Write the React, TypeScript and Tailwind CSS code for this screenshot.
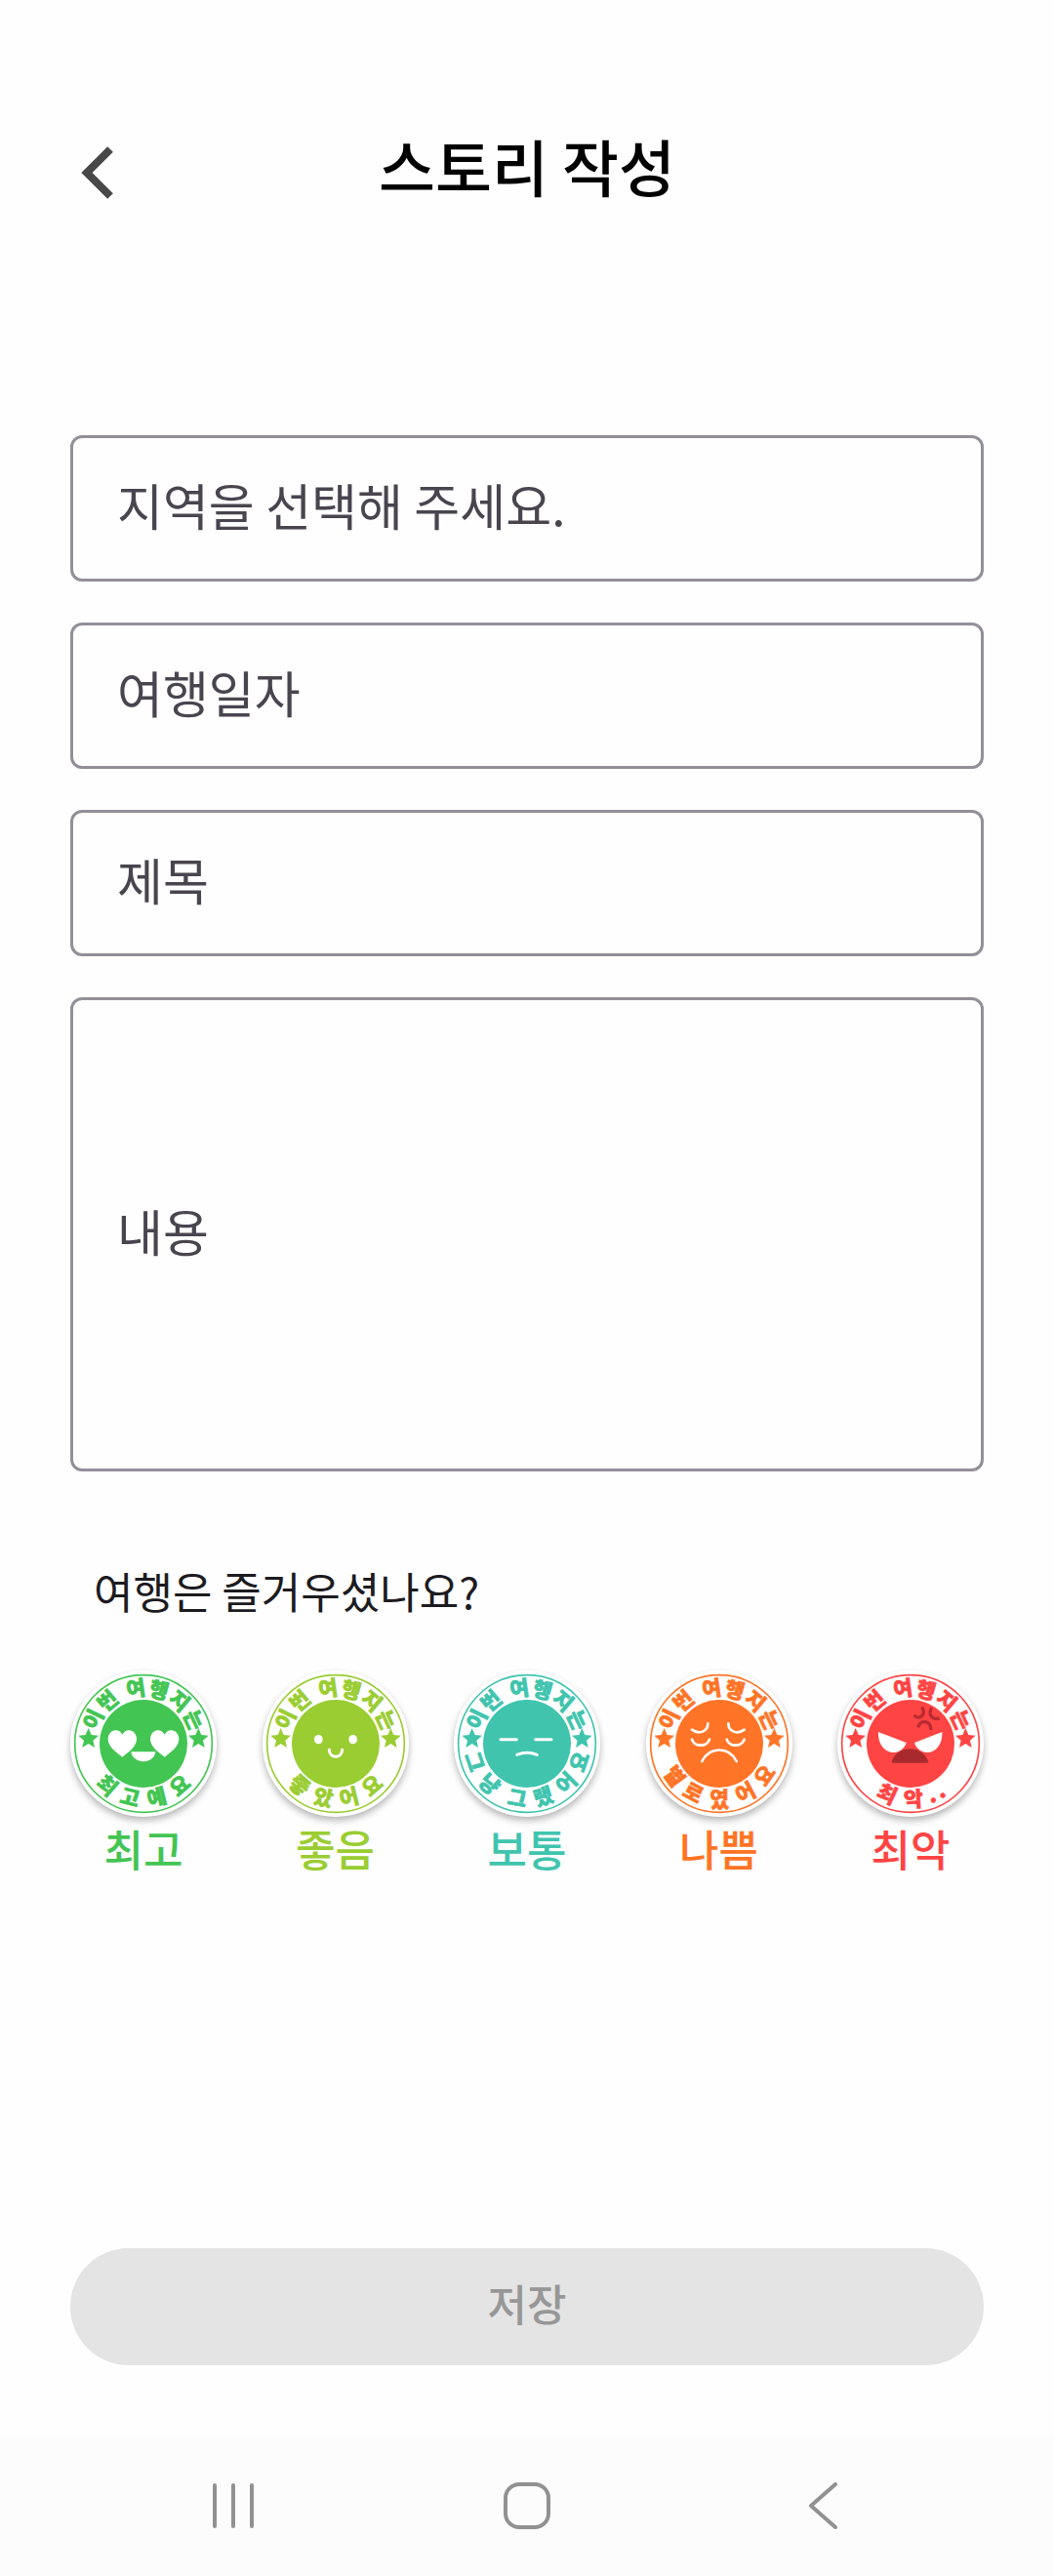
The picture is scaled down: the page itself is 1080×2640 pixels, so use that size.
import React from "react";

type Glyph = [char: string, angle: number];

const RING_TEXT: Glyph[] = [
  ["이", -64],
  ["번", -40],
  ["여", -8],
  ["행", 16],
  ["지", 40],
  ["는", 65],
];

const STAR = "M0 -31L9 -10L31 -8L14 7L19 29L0 17L-19 29L-14 7L-31 -8L-9 -10Z";

interface Mood {
  id: string;
  label: string;
  color: string;
  textClass: string;
  bottom: Glyph[];
  face: React.ReactNode;
}

const HEART = "M0 41C-12 31 -44 12 -44 -14C-44 -42 -12 -52 0 -28C12 -52 44 -42 44 -14C44 12 12 31 0 41Z";

const MOODS: Mood[] = [
  {
    id: "best",
    label: "최고",
    color: "#43c553",
    textClass: "text-[#43c553]",
    bottom: [["최", 41], ["고", 14], ["예", -14], ["요", -41]],
    face: (
      <g fill="#fff">
        <path d={HEART} transform="translate(-65 0)" />
        <path d={HEART} transform="translate(65 0)" />
        <path d="M-38 25H37C35 44 18 55 0 55S-36 44 -38 25Z" />
      </g>
    ),
  },
  {
    id: "good",
    label: "좋음",
    color: "#9acd32",
    textClass: "text-[#9acd32]",
    bottom: [["좋", 41], ["았", 13], ["어", -14], ["요", -41]],
    face: (
      <g>
        <ellipse cx="-53" cy="-13" rx="13" ry="14" fill="#fff" />
        <ellipse cx="53" cy="-13" rx="13" ry="14" fill="#fff" />
        <path d="M-20 19C-18 47 18 47 20 19" fill="none" stroke="#fff" strokeWidth="9" strokeLinecap="round" />
      </g>
    ),
  },
  {
    id: "normal",
    label: "보통",
    color: "#40c4ae",
    textClass: "text-[#40c4ae]",
    bottom: [["그", 71], ["냥", 43], ["그", 10], ["랬", -17], ["어", -45], ["요", -71]],
    face: (
      <g fill="none" stroke="#fff" strokeWidth="9" strokeLinecap="round">
        <path d="M-81 -13H-32M26 -13H75M-31 34Q0 22 31 34" />
      </g>
    ),
  },
  {
    id: "bad",
    label: "나쁨",
    color: "#ff7426",
    textClass: "text-[#ff7426]",
    bottom: [["별", 54], ["로", 28], ["였", 0], ["어", -28], ["요", -55]],
    face: (
      <g fill="none" stroke="#fff" strokeWidth="8" strokeLinecap="round">
        <path d="M-84 -43C-62 -27 -35 -37 -35 -62M28 -62C28 -37 55 -27 77 -43" />
        <path d="M-84 -13C-74 11 -40 11 -30 -13M23 -13C33 11 67 11 77 -13" />
        <path d="M-53 54C-30 8 30 8 53 54" />
      </g>
    ),
  },
  {
    id: "worst",
    label: "최악",
    color: "#ff4444",
    textClass: "text-[#ff4444]",
    bottom: [["최", 25], ["악", -3], [".", -22], [".", -32]],
    face: (
      <g>
        <path d="M-99 -36L-13 -3C-20 20 -40 28 -57 27C-85 24 -101 -5 -99 -36Z" fill="#fff" />
        <path d="M97 -36L12 -3C19 20 39 28 56 27C83 24 99 -5 97 -36Z" fill="#fff" />
        <path d="M-58 57C-45 2 40 2 55 57Q55 59 50 59H-53Q-58 59 -58 57Z" fill="#a82a2e" />
        <g fill="none" stroke="#b92b31" strokeWidth="10">
          <path d="M11 -88C25 -70 50 -88 35 -113M65 -111C52 -88 68 -70 89 -79M23 -50C30 -76 62 -72 63 -42" />
        </g>
      </g>
    ),
  },
];

function Stamp({ mood }: { mood: Mood }) {
  return (
    <svg
      viewBox="-225 -225 450 450"
      className="block size-[150px] rounded-full bg-white shadow-[0_4px_7px_rgba(0,0,0,0.28)]"
      aria-hidden="true"
    >
      <circle r="211" fill="none" stroke={mood.color} strokeWidth="5" />
      <circle r="135" fill={mood.color} />
      <g fill={mood.color}>
        <path d={STAR} transform="translate(-169 -17)" />
        <path d={STAR} transform="translate(169 -17)" />
      </g>
      <g
        fill={mood.color}
        stroke={mood.color}
        strokeWidth="2"
        fontSize="64"
        fontWeight="900"
        textAnchor="middle"
      >
        {RING_TEXT.map(([char, angle]) => (
          <text key={angle} y="-148" transform={`rotate(${angle})`}>
            {char}
          </text>
        ))}
        {mood.bottom.map(([char, angle]) => (
          <text key={angle} y="194" transform={`rotate(${angle})`}>
            {char}
          </text>
        ))}
      </g>
      {mood.face}
    </svg>
  );
}

const FIELD =
  "block w-full rounded-xl border-3 border-[#938f99] bg-transparent px-[45px] text-[51px] leading-[72px] text-[#49454f] placeholder:text-[#49454f] placeholder:opacity-100 outline-none";

export default function App() {
  return (
    <div className="flex min-h-screen flex-col bg-[#fefefe] font-['Noto_Sans_CJK_KR',sans-serif] text-[#1c1b1f]">
      <header className="grid grid-cols-[1fr_auto_1fr] items-end px-[72px] pt-[122px]">
        <button type="button" aria-label="뒤로" className="flex h-[86px] w-14 items-center justify-center">
          <svg viewBox="0 0 34 54" className="h-[54px] w-[34px]" fill="none" stroke="#484848" strokeWidth="8">
            <path d="M30 3L6 27L30 51" />
          </svg>
        </button>
        <h1 className="pb-1 text-[63px] leading-[94px] font-medium text-black">스토리 작성</h1>
      </header>

      <form className="flex grow flex-col px-[72px] pt-[226px] pb-[72px]" onSubmit={(e) => e.preventDefault()}>
        <div className="flex flex-col gap-[42px]">
          <input className={`${FIELD} h-[150px] pb-2`} aria-label="지역" placeholder="지역을 선택해 주세요." />
          <input className={`${FIELD} h-[150px] pb-2`} aria-label="여행일자" placeholder="여행일자" />
          <input className={`${FIELD} h-[150px] pb-2`} aria-label="제목" placeholder="제목" />
          <textarea className={`${FIELD} h-[486px] resize-none py-[200px]`} aria-label="내용" placeholder="내용" />
        </div>

        <div role="radiogroup" aria-labelledby="mood-question" className="pt-[90px]">
          <p id="mood-question" className="px-6 text-[44px] leading-[64px]">
            여행은 즐거우셨나요?
          </p>
          <div className="flex justify-between pt-[50px]">
            {MOODS.map((mood) => (
              <label key={mood.id} className="flex cursor-pointer flex-col items-center">
                <input type="radio" name="mood" value={mood.id} className="sr-only" />
                <Stamp mood={mood} />
                <span className={`text-[44px] leading-[64px] font-medium ${mood.textClass}`}>{mood.label}</span>
              </label>
            ))}
          </div>
        </div>

        <button
          type="submit"
          disabled
          className="mt-auto h-[120px] w-full rounded-full bg-[#e4e4e4] pb-2 text-[44px] font-medium text-[#979797]"
        >
          저장
        </button>
      </form>

      <nav className="grid h-36 grid-cols-3 items-center justify-items-center bg-[#fcfcfc] px-[88px]" aria-label="시스템">
        <button type="button" aria-label="최근 앱">
          <svg viewBox="0 0 48 48" className="size-12" stroke="#919191" strokeWidth="4" strokeLinecap="round">
            <path d="M5 3V45M24 3V45M43 3V45" />
          </svg>
        </button>
        <button type="button" aria-label="홈">
          <svg viewBox="0 0 48 48" className="size-12" fill="none" stroke="#919191" strokeWidth="4">
            <rect x="2" y="2" width="44" height="44" rx="14" />
          </svg>
        </button>
        <button type="button" aria-label="뒤로 가기">
          <svg
            viewBox="0 0 48 48"
            className="size-12"
            fill="none"
            stroke="#919191"
            strokeWidth="4"
            strokeLinecap="round"
            strokeLinejoin="round"
          >
            <path d="M39 2L14 24L39 46" />
          </svg>
        </button>
      </nav>
    </div>
  );
}
